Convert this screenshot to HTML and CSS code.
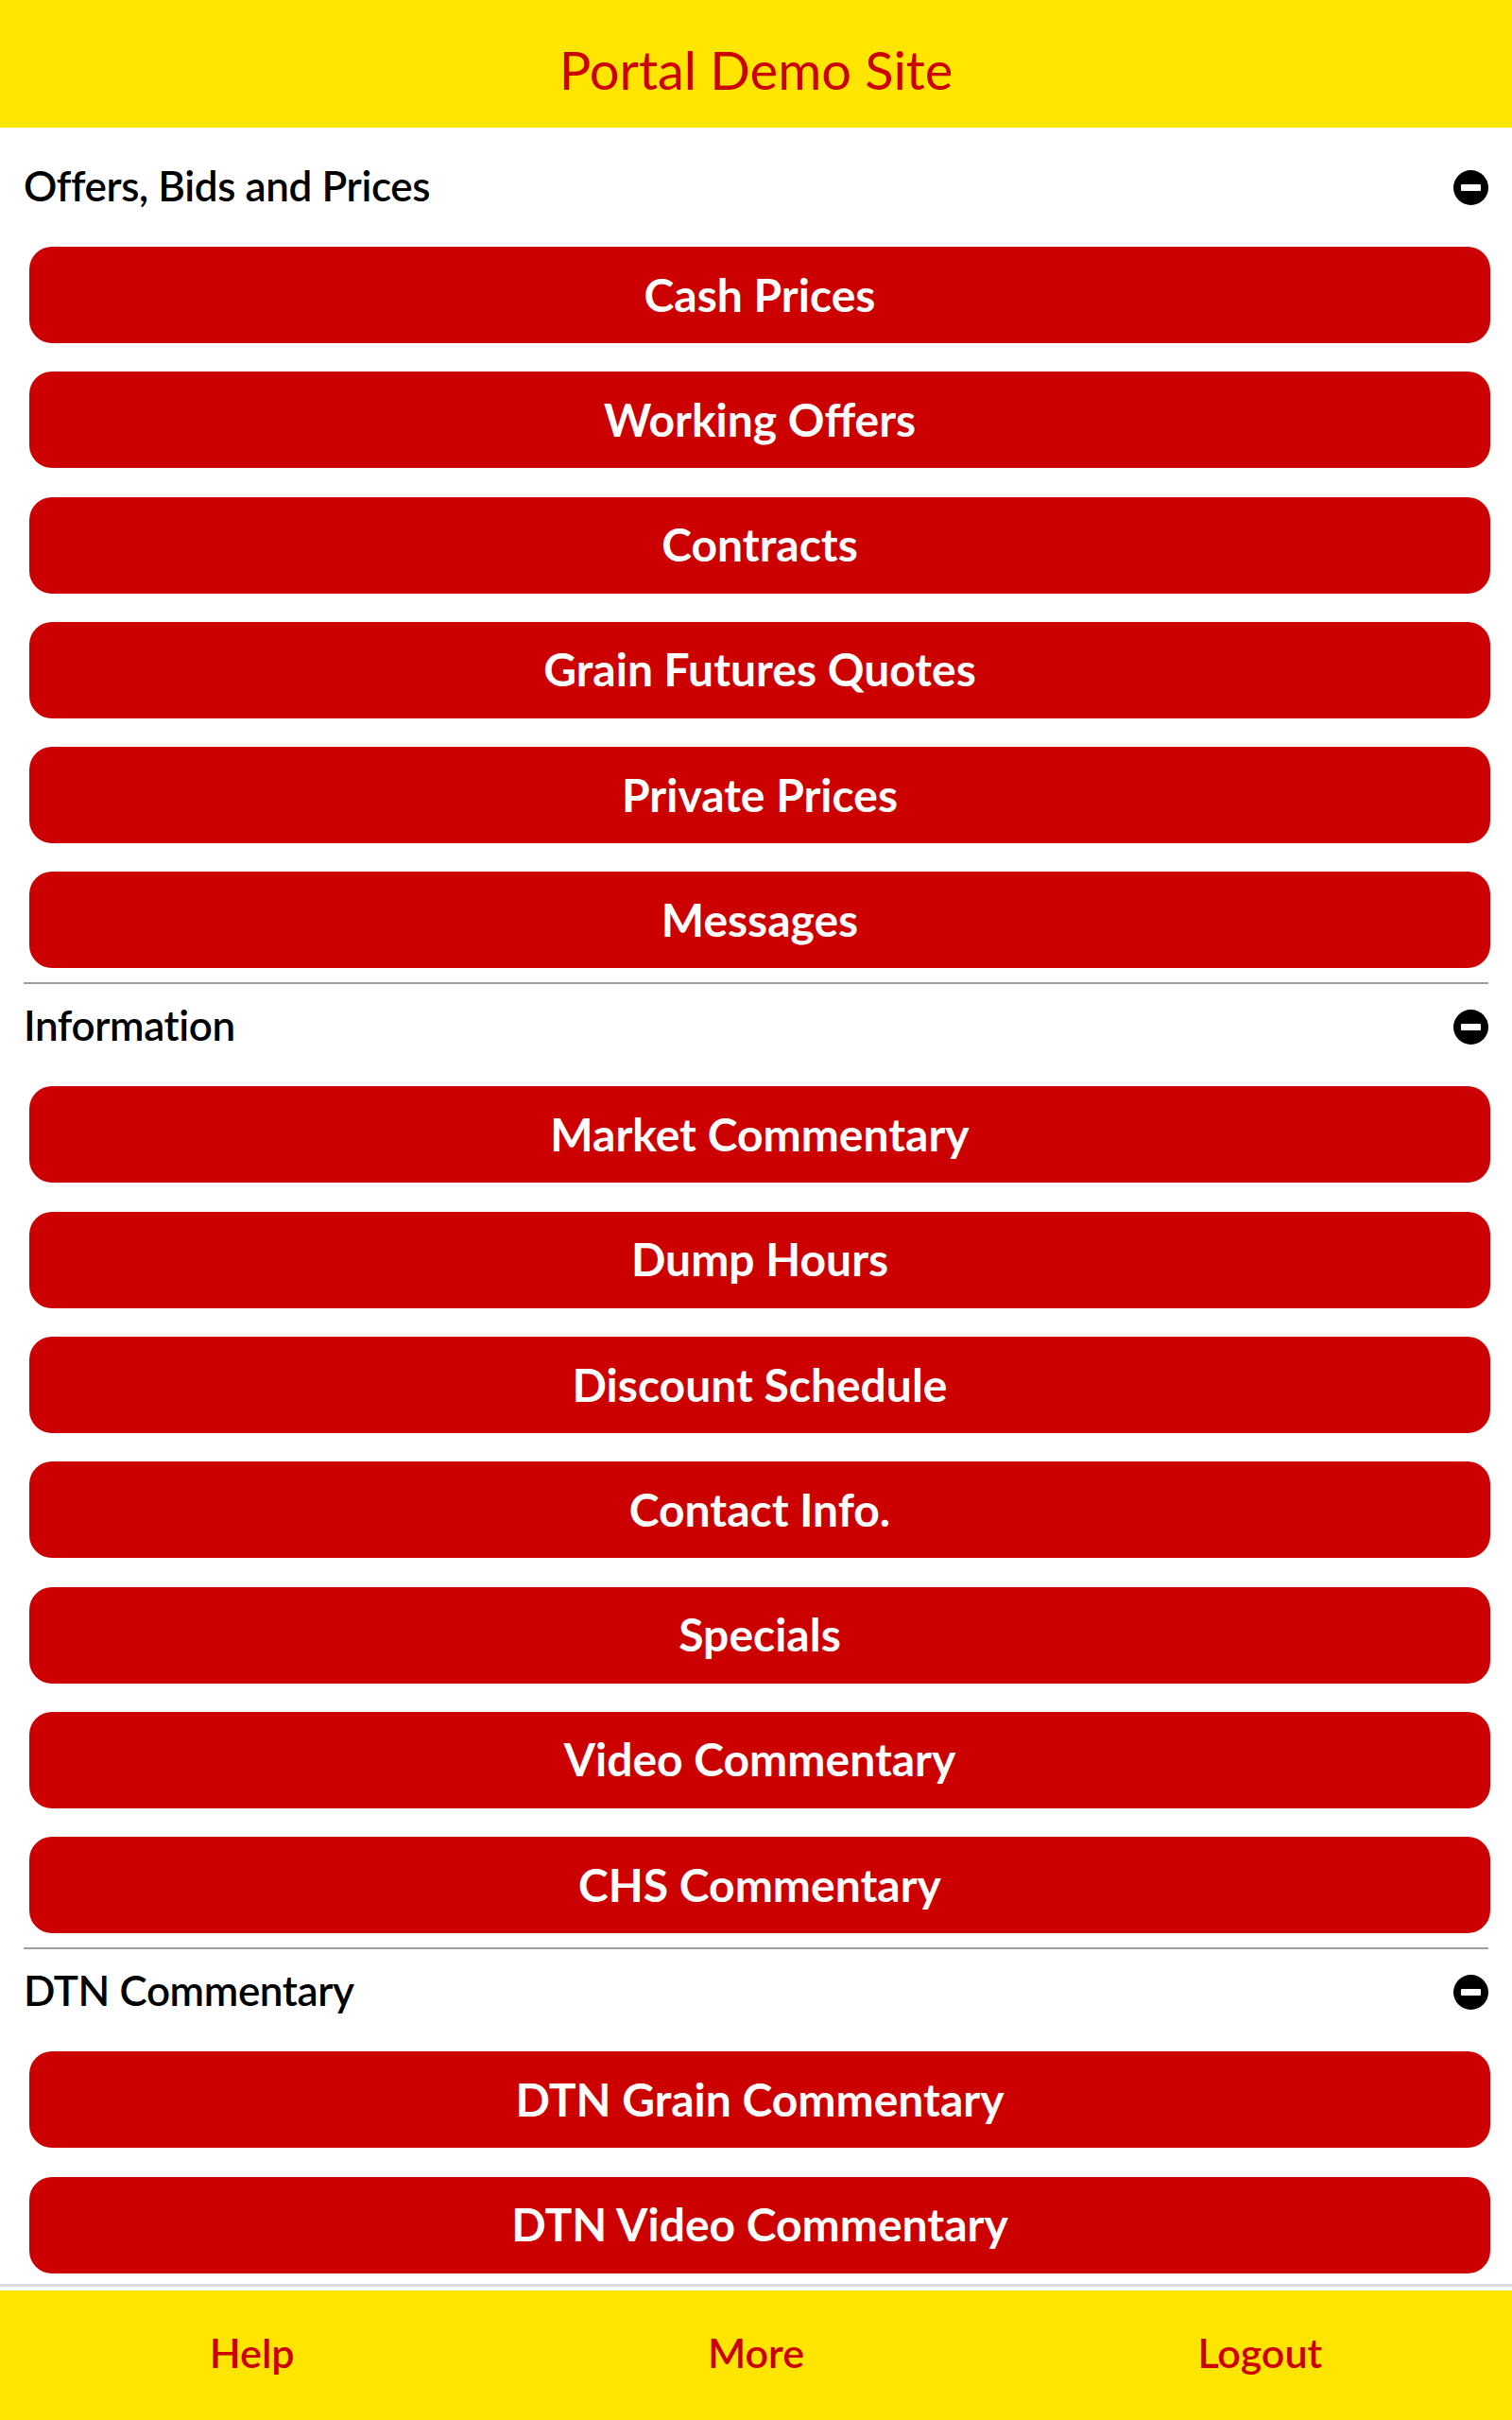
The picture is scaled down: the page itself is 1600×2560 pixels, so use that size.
FILE: index.html
```html
<!DOCTYPE html>
<html lang="en">
<head>
    <meta charset="UTF-8">
    <title>Portal Demo Site</title>
    <link rel="stylesheet" href="styles.css">
</head>
<body>

	<div class="header">
		<h1 class="title">Portal Demo Site</h1>
	</div>

	<div class="content">

		<div class="section first">
			<div class="section_head">
				<span>Offers, Bids and Prices</span>
				<svg class="minus" viewBox="0 0 37 37"><circle cx="18.5" cy="18.5" r="18.5"/><rect x="8" y="15" width="21" height="7" rx="1" fill="#fff"/></svg>
			</div>
			<div class="buttons">
				<a class="btn" href="#">Cash Prices</a>
				<a class="btn" href="#">Working Offers</a>
				<a class="btn" href="#">Contracts</a>
				<a class="btn" href="#">Grain Futures Quotes</a>
				<a class="btn" href="#">Private Prices</a>
				<a class="btn" href="#">Messages</a>
			</div>
		</div>

		<div class="section">
			<div class="section_head">
				<span>Information</span>
				<svg class="minus" viewBox="0 0 37 37"><circle cx="18.5" cy="18.5" r="18.5"/><rect x="8" y="15" width="21" height="7" rx="1" fill="#fff"/></svg>
			</div>
			<div class="buttons">
				<a class="btn" href="#">Market Commentary</a>
				<a class="btn" href="#">Dump Hours</a>
				<a class="btn" href="#">Discount Schedule</a>
				<a class="btn" href="#">Contact Info.</a>
				<a class="btn" href="#">Specials</a>
				<a class="btn" href="#">Video Commentary</a>
				<a class="btn" href="#">CHS Commentary</a>
			</div>
		</div>

		<div class="section last">
			<div class="section_head">
				<span>DTN Commentary</span>
				<svg class="minus" viewBox="0 0 37 37"><circle cx="18.5" cy="18.5" r="18.5"/><rect x="8" y="15" width="21" height="7" rx="1" fill="#fff"/></svg>
			</div>
			<div class="buttons">
				<a class="btn" href="#">DTN Grain Commentary</a>
				<a class="btn" href="#">DTN Video Commentary</a>
			</div>
		</div>

	</div>

	<div class="footer">
		<div class="footer_bar">
			<a href="#">Help</a>
			<a href="#">More</a>
			<a href="#">Logout</a>
		</div>
	</div>

</body>
</html>
```

FILE: styles.css
```css
		:root {
			--yellow: #ffe600;
			--red: #cc0000;
		}
		body {
			margin: 0;
			font-family: Lato, "Open Sans", sans-serif;
			background: white;
		}
		.header {
			height: 135px;
			box-sizing: border-box;
			padding-top: 12px;
			background: var(--yellow);
			display: flex;
			align-items: center;
			justify-content: center;
		}
		.title {
			margin: 0;
			font-size: 56px;
			font-weight: 400;
			color: var(--red);
		}
		.content {
			padding: 16px 25px 0 25px;
		}
		.section {
			border-top: 2px solid #9e9e9e;
			padding-bottom: 15px;
		}
		.section.first { border-top-color: transparent; }
		.section.last { padding-bottom: 11px; }
		.section_head {
			height: 90px;
			display: flex;
			align-items: center;
			justify-content: space-between;
			font-size: 44px;
			font-weight: 600;
			letter-spacing: -0.4px;
			color: black;
		}
		.section_head span {
			padding-bottom: 4px;
		}
		.minus {
			width: 37px;
			height: 37px;
		}
		.buttons {
			padding-top: 18px;
			display: flex;
			flex-direction: column;
			gap: 30.3px;
			margin: 0 -2px 0 6px;
		}
		.btn {
			height: 102px;
			box-sizing: border-box;
			padding-bottom: 2px;
			display: flex;
			align-items: center;
			justify-content: center;
			background: var(--red);
			border-radius: 24px;
			color: white;
			text-decoration: none;
			font-size: 48px;
			font-weight: 700;
		}
		.footer {
			border-top: 3px solid #dadae0;
			padding-top: 4px;
		}
		.footer_bar {
			height: 138px;
			box-sizing: border-box;
			padding-bottom: 6px;
			background: var(--yellow);
			display: grid;
			grid-template-columns: 1fr 1fr 1fr;
			align-items: center;
			justify-items: center;
		}
		.footer_bar a {
			color: var(--red);
			text-decoration: none;
			font-size: 43px;
			font-weight: 600;
		}
```
